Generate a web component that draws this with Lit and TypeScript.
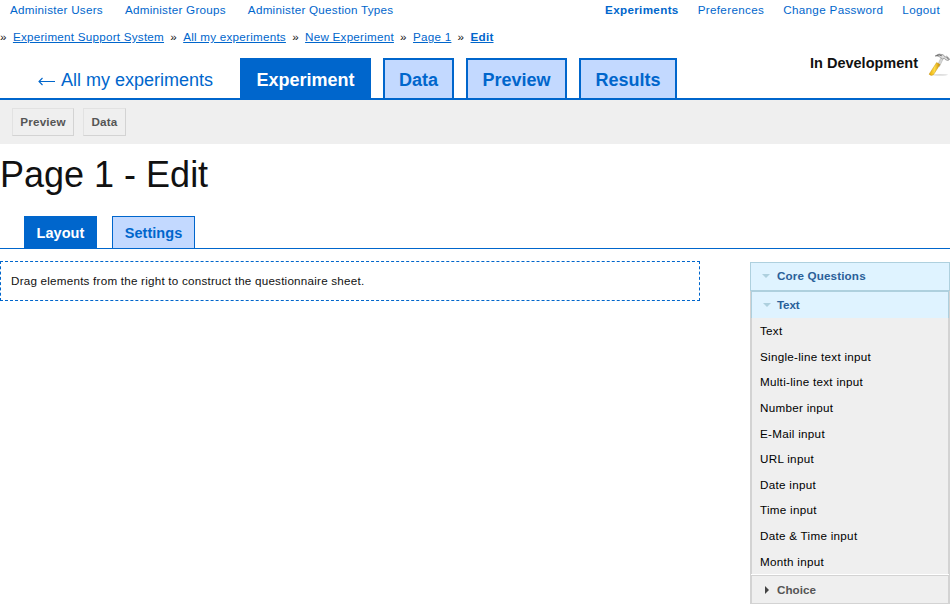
import { LitElement, html, css } from "lit";
import { customElement } from "lit/decorators.js";

const INPUTS = ["Text", "Single-line text input", "Multi-line text input", "Number input", "E-Mail input", "URL input", "Date input", "Time input", "Date & Time input", "Month input"];

@customElement("app-root")
export class AppRoot extends LitElement {
  static styles = css`
    :host { display: block; width: 950px; height: 604px; overflow: hidden; background: #fff; color: #111; font: 11.67px/20px "Liberation Sans", Arial, sans-serif; letter-spacing: 0.22px; }
    * { box-sizing: border-box; }
    a { color: #06c; white-space: nowrap; text-decoration: none; }
    .top { display: flex; justify-content: space-between; height: 27px; padding: 0 10px; }
    .top div { display: flex; }
    .admin { gap: 22px; letter-spacing: 0.26px; }
    .top .user { gap: 19px; letter-spacing: 0.33px; }
    .crumbs { display: flex; height: 31px; line-height: 20px; letter-spacing: 0.24px; }
    .crumbs a { text-decoration: underline; margin: 0 6.2px 0 6.2px; }
    .b { font-weight: bold; }
    .nav { display: flex; height: 42px; border-bottom: 2px solid #06c; letter-spacing: 0; }
    .back { display: flex; width: 240px; padding-left: 37px; font-size: 18px; line-height: 44px; }
    .back svg { margin: 17px 5px 0 0; }
    .tabs { display: flex; gap: 12px; flex: 1; }
    .tab { height: 40px; border: 2px solid #06c; border-bottom: 0; background: #c3d9ff; font-weight: bold; font-size: 18px; line-height: 40px; text-align: center; }
    .tab.on, .sub.on { background: #06c; color: #fff; }
    .w1 { width: 131px; } .w2 { width: 71px; } .w3 { width: 101px; } .w4 { width: 98px; }
    .status { display: flex; font-weight: bold; font-size: 14.5px; line-height: 11px; }
    .status svg { margin: -6px 0 0 10px; }
    .bar { display: flex; gap: 9px; height: 44px; background: #efefef; padding: 8px 12px; }
    .btn { height: 28px; border: 1px solid #e2e2e2; border-right-color: #d3d3d3; border-bottom-color: #d3d3d3; color: #555; font-weight: bold; line-height: 25px; text-align: center; }
    .p { width: 62px; } .d { width: 43px; }
    h1 { margin: 0; height: 72px; font-weight: normal; font-size: 36px; line-height: 62px; letter-spacing: 0; }
    .subs { display: flex; gap: 15px; height: 33px; padding-left: 24px; border-bottom: 1px solid #06c; letter-spacing: 0.05px; }
    .sub { height: 32px; border: 1px solid #06c; border-bottom: 0; background: #c3d9ff; font-weight: bold; font-size: 14.5px; line-height: 32px; text-align: center; }
    .s1 { width: 73px; } .s2 { width: 83px; }
    .main { display: flex; justify-content: space-between; padding-top: 12px; }
    .drop { width: 700px; height: 40px; border: 1px dashed #06c; padding-left: 10px; line-height: 37px; }
    .side { width: 200px; margin-top: 1px; }
    .head { display: flex; align-items: flex-start; height: 29px; padding-left: 11px; border: 1px solid #aed0de; background: #dff3ff; color: #2a6099; font-weight: bold; line-height: 25px; letter-spacing: 0.14px; }
    .head svg { margin: 7px 7px 0 0; }
    .inner { border: 1px solid #d3d3d3; border-width: 0 1px; height: 313px; }
    .inner .head { padding-left: 11px; height: 27px; border-bottom: 0; letter-spacing: -0.15px; }
    .inner .head svg { margin-right: 6px; }
    .list { height: 256px; border: 1px solid #d3d3d3; border-width: 0 1px; background: #efefef; color: #000; letter-spacing: 0.28px; }
    .item { height: 25.65px; line-height: 26px; padding-left: 8px; }
    .inner .choice { margin-top: 1px; height: 29px; border: 1px solid #d3d3d3; background: #efefef; color: #555; line-height: 27px; letter-spacing: 0; }
    .inner .choice svg { margin-top: 8px; }
  `;

  render() {
    const down = html`<svg width="8" height="12" viewBox="0 0 8 12"><path d="M0 4h8L4 8z" fill="#aed0de"/></svg>`;
    return html`
      <div class="top">
        <div class="admin"><a>Administer Users</a><a>Administer Groups</a><a>Administer Question Types</a></div>
        <div class="user"><a class="b">Experiments</a><a>Preferences</a><a>Change Password</a><a>Logout</a></div>
      </div>
      <div class="crumbs">»<a>Experiment Support System</a>»<a>All my experiments</a>»<a>New Experiment</a>»<a>Page 1</a>»<a class="b">Edit</a></div>
      <div class="nav">
        <a class="back"><svg width="19" height="13" viewBox="0 0 19 13"><path d="M18 6.5H2M5.5 3 2 6.5 5.5 10" fill="none" stroke="#06c" stroke-width="1.1"/></svg>All my experiments</a>
        <div class="tabs"><a class="tab on w1">Experiment</a><a class="tab w2">Data</a><a class="tab w3">Preview</a><a class="tab w4">Results</a></div>
        <div class="status">In Development
          <svg width="22" height="24" viewBox="0 0 22 24">
            <defs><linearGradient id="wood"><stop stop-color="#e8a900"/><stop offset=".5" stop-color="#ffdc48"/><stop offset="1" stop-color="#c98b00"/></linearGradient></defs>
            <ellipse cx="12" cy="22.8" rx="8" ry=".9" fill="#bbb" opacity=".5"/>
            <g transform="translate(0 .8)">
              <path d="M9.6 12.2 13 4.8l2.3 1-3.8 8z" fill="#d5d6d5" stroke="#999" stroke-width=".4"/>
              <path d="M8.6 9.8 12 11.7 5.4 22Q3.2 23.4 1.1 21.4z" fill="url(#wood)" stroke="#b98200" stroke-width=".4"/>
              <path d="M7 3.2Q11-.1 15.3 2l1.8 2.3 1.6-.9 2.9 2.7-1.3 1.6-2.6-.6-1.4-1.7-1.8.8-2.2-1.7Q10.2 2.7 7 3.2z" fill="#ddd" stroke="#777" stroke-width=".6"/>
              <path d="m18.6 4.2 2.3 2.6M8.5 2.7q3-1.4 5.3.3" stroke="#444" stroke-width=".8" fill="none"/>
            </g>
          </svg>
        </div>
      </div>
      <div class="bar"><a class="btn p">Preview</a><a class="btn d">Data</a></div>
      <h1>Page 1 - Edit</h1>
      <div class="subs"><a class="sub on s1">Layout</a><a class="sub s2">Settings</a></div>
      <div class="main">
        <div class="drop">Drag elements from the right to construct the questionnaire sheet.</div>
        <div class="side">
          <div class="head">${down}Core Questions</div>
          <div class="inner">
            <div class="head">${down}Text</div>
            <div class="list">${INPUTS.map((t) => html`<div class="item">${t}</div>`)}</div>
            <div class="head choice"><svg width="8" height="12" viewBox="0 0 8 12"><path d="M2 2l4 4-4 4z" fill="#444"/></svg>Choice</div>
          </div>
        </div>
      </div>`;
  }
}
